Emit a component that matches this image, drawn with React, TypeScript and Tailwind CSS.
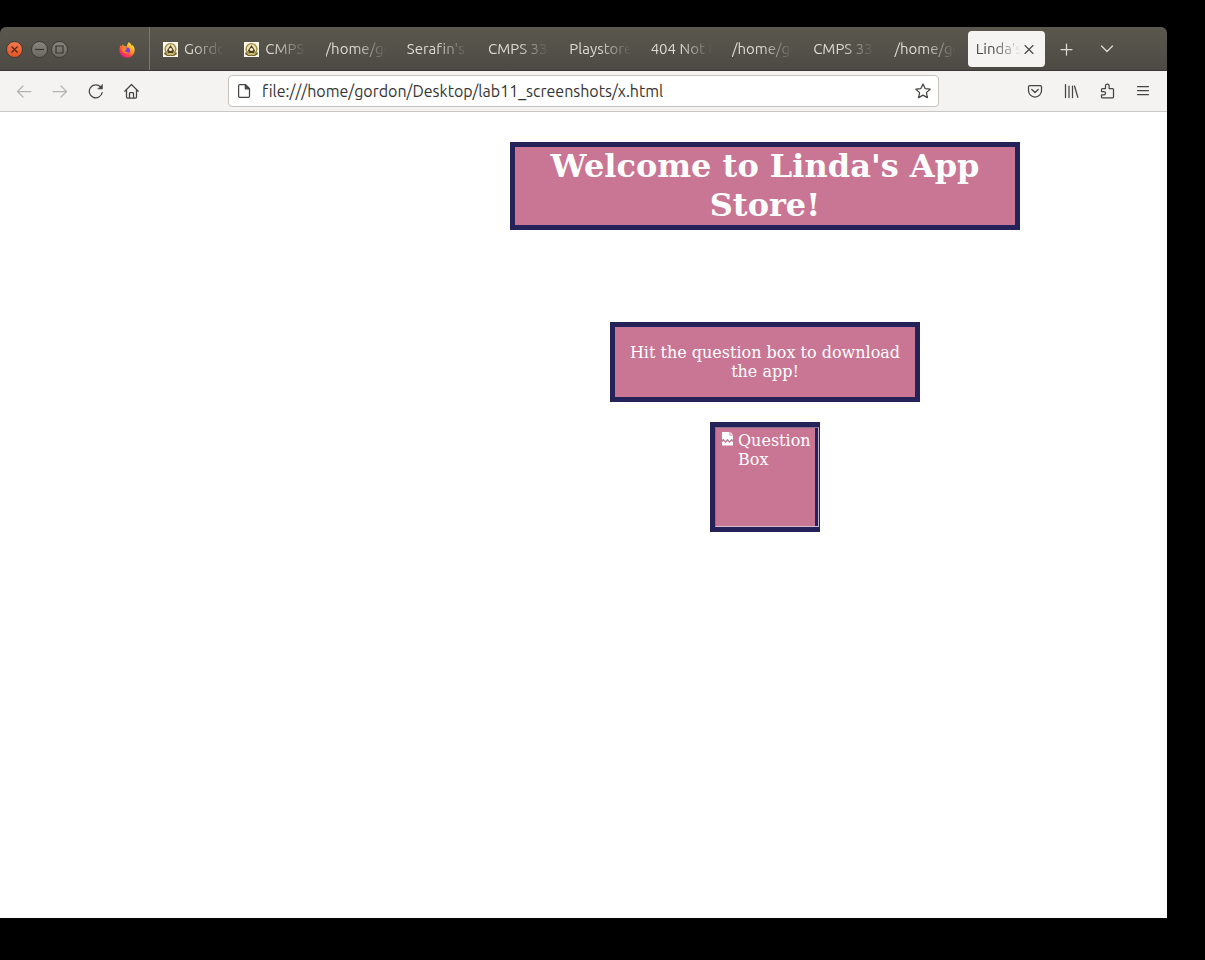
import type { ReactNode } from 'react';

type TabInfo = { title: string; favicon?: boolean };

const tabs: TabInfo[] = [
  { title: 'Gordo', favicon: true },
  { title: 'CMPS', favicon: true },
  { title: '/home/go' },
  { title: "Serafin's" },
  { title: 'CMPS 33' },
  { title: 'Playstore' },
  { title: '404 Not F' },
  { title: '/home/go' },
  { title: 'CMPS 33' },
  { title: '/home/go' },
];

function Icon({ children }: { children: ReactNode }) {
  return (
    <svg
      className="size-4 shrink-0"
      viewBox="0 0 16 16"
      fill="none"
      stroke="currentColor"
      strokeWidth="1.25"
      strokeLinecap="round"
      strokeLinejoin="round"
      aria-hidden="true"
    >
      {children}
    </svg>
  );
}

function ToolButton({ label, disabled, children }: { label: string; disabled?: boolean; children: ReactNode }) {
  return (
    <button
      aria-label={label}
      disabled={disabled}
      className="flex h-8 w-9 shrink-0 items-center justify-center text-[#464543] disabled:text-[#b5b4b1]"
    >
      <Icon>{children}</Icon>
    </button>
  );
}

function Favicon() {
  return (
    <svg className="size-[15px] shrink-0" viewBox="0 0 15 15" aria-hidden="true">
      <rect width="15" height="15" fill="#fbf8ec" />
      <circle cx="7.5" cy="7" r="5.4" fill="#efe6b8" stroke="#a08b42" strokeWidth="1.4" />
      <path d="M2 9.500a6 6 0 0 0 11 0l1 2.500-3 2H4l-3-2z" fill="#75652f" />
      <path d="M7.500 3 4 8.500 5 11h5l1-2.500z" fill="#4f4022" />
      <circle cx="7.500" cy="7.500" r="1.600" fill="#fff6cf" />
      <path d="M4 11.800q3.500 2 7 0" fill="none" stroke="#d5c069" />
    </svg>
  );
}

function FirefoxLogo() {
  return (
    <svg className="size-4" viewBox="0 0 16 16" aria-hidden="true">
      <defs>
        <linearGradient id="flame" x1="0.85" y1="0.05" x2="0.2" y2="0.95">
          <stop offset="0" stopColor="#fff04a" />
          <stop offset="0.4" stopColor="#ff9a20" />
          <stop offset="0.75" stopColor="#ff3b48" />
          <stop offset="1" stopColor="#e0159b" />
        </linearGradient>
      </defs>
      <path
        d="M9.700.2c2 1.100 2.700 2.400 3 3.700.5-.2.4-.8.3-1.200 1.700 1.200 2.700 3.200 2.700 5.400a7.700 7.700 0 0 1-15.400 0c0-2 .7-3.900 1.700-5.100 0 .8.100 1.200.4 1.500.4-1 1.100-1.800 2-2.200-.1.700.1 1.400.5 1.800 1.300-.1 2.100.1 2.800.6.300-1.700 1-3.300 2-4.500z"
        fill="url(#flame)"
      />
      <circle cx="8" cy="8.400" r="3" fill="#7a3ee0" />
      <path d="M3.300 6.500c1.600-1.300 3-.6 4.700.2-.5 1-1.700.9-1.900 1.900 0 1.400 1.700 2.100 3.500 1.300-1 2.200-4.800 2-5.900-.5-.4-.9-.6-1.900-.4-2.900z" fill="#ff8a23" />
    </svg>
  );
}

function WindowButton({ label, close, children }: { label: string; close?: boolean; children: ReactNode }) {
  return (
    <button
      aria-label={label}
      className={
        close
          ? 'mr-2 flex size-[17px] items-center justify-center rounded-full border border-[#3e3b35] bg-linear-to-b from-[#f3794d] to-[#e5511f] text-[#51281a]'
          : 'mr-[3px] flex size-[17px] items-center justify-center rounded-full border border-[#3b3a34] bg-linear-to-b from-[#86847b] to-[#6c6a61] text-[#373630]'
      }
    >
      <svg className="size-[15px] shrink-0" viewBox="0 0 15 15" fill="none" stroke="currentColor" strokeWidth="1.2">
        {children}
      </svg>
    </button>
  );
}

function TabStrip() {
  return (
    <header className="flex h-11 items-stretch rounded-t-md border-b border-[#3a3935] bg-linear-to-b from-[#5b584e] to-[#4c4a44] text-[#dfdbd2]">
      <div className="flex w-[150px] shrink-0 items-center border-r border-[#7b786f] pt-0.5 pl-[6px]">
        <WindowButton label="Close window" close>
          <path d="m4.500 4.500 6 6m0-6-6 6" />
        </WindowButton>
        <WindowButton label="Minimize">
          <path d="M3 7.500h9" />
        </WindowButton>
        <WindowButton label="Maximize">
          <path d="M4 4h7v7H4z" />
        </WindowButton>
        <button aria-label="Firefox" className="mr-[14px] ml-auto">
          <FirefoxLogo />
        </button>
      </div>
      <nav className="grid min-w-0 flex-1 grid-cols-11 items-center pl-[3px] text-[15px]">
        {tabs.map((tab, i) => (
          <button key={i} className="flex h-9 min-w-0 items-center gap-[6px] px-[10px] pt-0.5">
            {tab.favicon && <Favicon />}
            <span className="min-w-0 flex-1 overflow-hidden text-left whitespace-nowrap [mask-image:linear-gradient(to_left,transparent,black_32px)]">
              {tab.title}
            </span>
          </button>
        ))}
        <div className="min-w-0 px-0.5">
          <div className="flex h-9 items-center rounded bg-[#f5f4f2] px-2 pt-0.5 text-[#464543]">
            <button className="min-w-0 flex-1 overflow-hidden text-left whitespace-nowrap [mask-image:linear-gradient(to_left,transparent,black_28px)]">
              Linda's
            </button>
            <button aria-label="Close tab">
              <Icon>
                <path d="m4 3.500 8 8m0-8-8 8" strokeWidth="1.1" />
              </Icon>
            </button>
          </div>
        </div>
      </nav>
      <div className="flex w-[120px] shrink-0 items-center">
        <button aria-label="New tab" className="flex h-9 w-10 items-center justify-center">
          <Icon>
            <path d="M7.500 3v11M2 8.500h11" />
          </Icon>
        </button>
        <button aria-label="List all tabs" className="flex h-9 w-10 items-center justify-center">
          <Icon>
            <path d="m2.500 5 5.500 5.500 5.500-5.500" />
          </Icon>
        </button>
      </div>
    </header>
  );
}

function Toolbar() {
  return (
    <div className="flex h-[41px] items-center border-b border-[#c9c8c5] bg-[#f4f3f2] px-[6px]">
      <ToolButton label="Back" disabled>
        <path d="M15 8.500H1.500M7 3 1.500 8.500 7 14" />
      </ToolButton>
      <ToolButton label="Forward" disabled>
        <path d="M1 8.500h13.500M9 3l5.500 5.500L9 14" />
      </ToolButton>
      <ToolButton label="Reload">
        <path d="M14.200 9.500A6.500 6.500 0 1 1 12.600 4" />
        <path d="M14.500 1.500V6H10z" fill="currentColor" strokeWidth="0.5" />
      </ToolButton>
      <ToolButton label="Home">
        <path d="M.8 8.200 7.500 1.500l6.700 6.700M2.500 6.500v7.500c0 .7.400 1 1 1h8c.6 0 1-.3 1-1V6.500M5.500 14.800v-4.500q0-.8.8-.8h2.400q.8 0 .8.800v4.500" />
      </ToolButton>

      <form className="mx-[78px] flex h-8 min-w-0 flex-1 items-center rounded border border-[#c4c2bf] bg-white px-[7px] text-[#464543]">
        <Icon>
          <path d="M4 1.600h5.500l4 4v7.400c0 .8-.5 1.400-1.400 1.400H4c-.9 0-1.400-.6-1.400-1.400V3c0-.9.500-1.400 1.400-1.400z" />
          <path d="M9.300 1.600v4.200h4.200z" fill="currentColor" />
        </Icon>
        <input
          aria-label="Address"
          defaultValue="file:///home/gordon/Desktop/lab11_screenshots/x.html"
          className="min-w-0 flex-1 bg-transparent px-[10px] text-base text-[#353432] outline-none"
        />
        <button type="button" aria-label="Bookmark this page">
          <Icon>
            <path d="m8 1 2.100 4.600 5 .6-3.700 3.400 1 5L8 12.100l-4.400 2.500 1-5L.9 6.200l5-.6z" />
          </Icon>
        </button>
      </form>

      <ToolButton label="Save to Pocket">
        <path d="M2.800 2.500h10.400c.8 0 1.300.5 1.300 1.300v3.700a6.500 6.500 0 0 1-13 0V3.800c0-.8.500-1.300 1.300-1.300z" />
        <path d="M4.800 6.500 8 9.500l3.200-3" />
      </ToolButton>
      <ToolButton label="Library">
        <path d="M2.500 1.500v13M6 3v11.500M9.500 3v11.500M11.500 3l3.300 11.300" />
      </ToolButton>
      <ToolButton label="Extensions">
        <path d="M2.500 8.500v-2c0-.7.400-1 1-1H6.500V2.800a1.800 1.800 0 0 1 3.600 0v2.700h3.400c.6 0 1 .4 1 1v7.400c0 .6-.4 1-1 1H3.500c-.6 0-1-.4-1-1v-2h2.300a1.700 1.700 0 0 0 0-3.400z" />
      </ToolButton>
      <ToolButton label="Open menu">
        <path d="M2.500 3.500h11M2.500 7.500h11M2.500 11.500h11" />
      </ToolButton>
    </div>
  );
}

function BrokenImage({ alt }: { alt: string }) {
  return (
    <div
      role="img"
      aria-label={alt}
      className="flex h-[100px] w-[104px] shrink-0 items-start gap-1 border border-t-[#8d6f8b] border-r-[#b8b6d2] border-b-[#d5bdd0] border-l-[#8d6f8b] px-[5px] py-[3px] text-left"
    >
      <svg className="h-[15px] w-[13px] shrink-0" viewBox="0 0 13 15" aria-hidden="true">
        <path d="M1 1h7.500v3.500H12V9l-1.500-1-2 2-2-2-2 2-2-2L1 9z" fill="#fff" />
        <path d="m9.300 1 2.700 2.700H9.300z" fill="#fff" />
        <path d="m1 11 1.500-1 2 2 2-2 2 2 2-2 1.500 1v3.500H1z" fill="#fff" />
        <path d="m1 9.500 1.500-1 2 2 2-2 2 2 2-2 1.500 1" fill="none" stroke="#a3919c" />
      </svg>
      <span>{alt}</span>
    </div>
  );
}

export default function App() {
  return (
    <div className="flex min-h-screen flex-col bg-black pt-[27px] pr-[38px] pb-[42px] font-['Ubuntu','Noto_Sans',sans-serif] [font-variant-ligatures:none]">
      <TabStrip />
      <Toolbar />
      <main className="flex flex-1 flex-col bg-white pt-[30px] pl-[510px] font-['DejaVu_Serif',serif] text-white">
        <div className="flex w-[510px] flex-col items-center text-center">
          <h1 className="mb-[92px] w-full border-5 border-[#25225a] bg-[#c97694] text-[32px] leading-[39px] font-bold">
            Welcome to Linda's App Store!
          </h1>
          <p className="mb-5 w-[310px] border-5 border-[#25225a] bg-[#c97694] py-4 text-base leading-[19px]">
            Hit the question box to download the app!
          </p>
          <button className="flex size-[110px] items-start border-5 border-[#25225a] bg-[#c97694] bg-clip-padding text-base leading-[19px]">
            <BrokenImage alt="Question Box" />
          </button>
        </div>
      </main>
    </div>
  );
}
